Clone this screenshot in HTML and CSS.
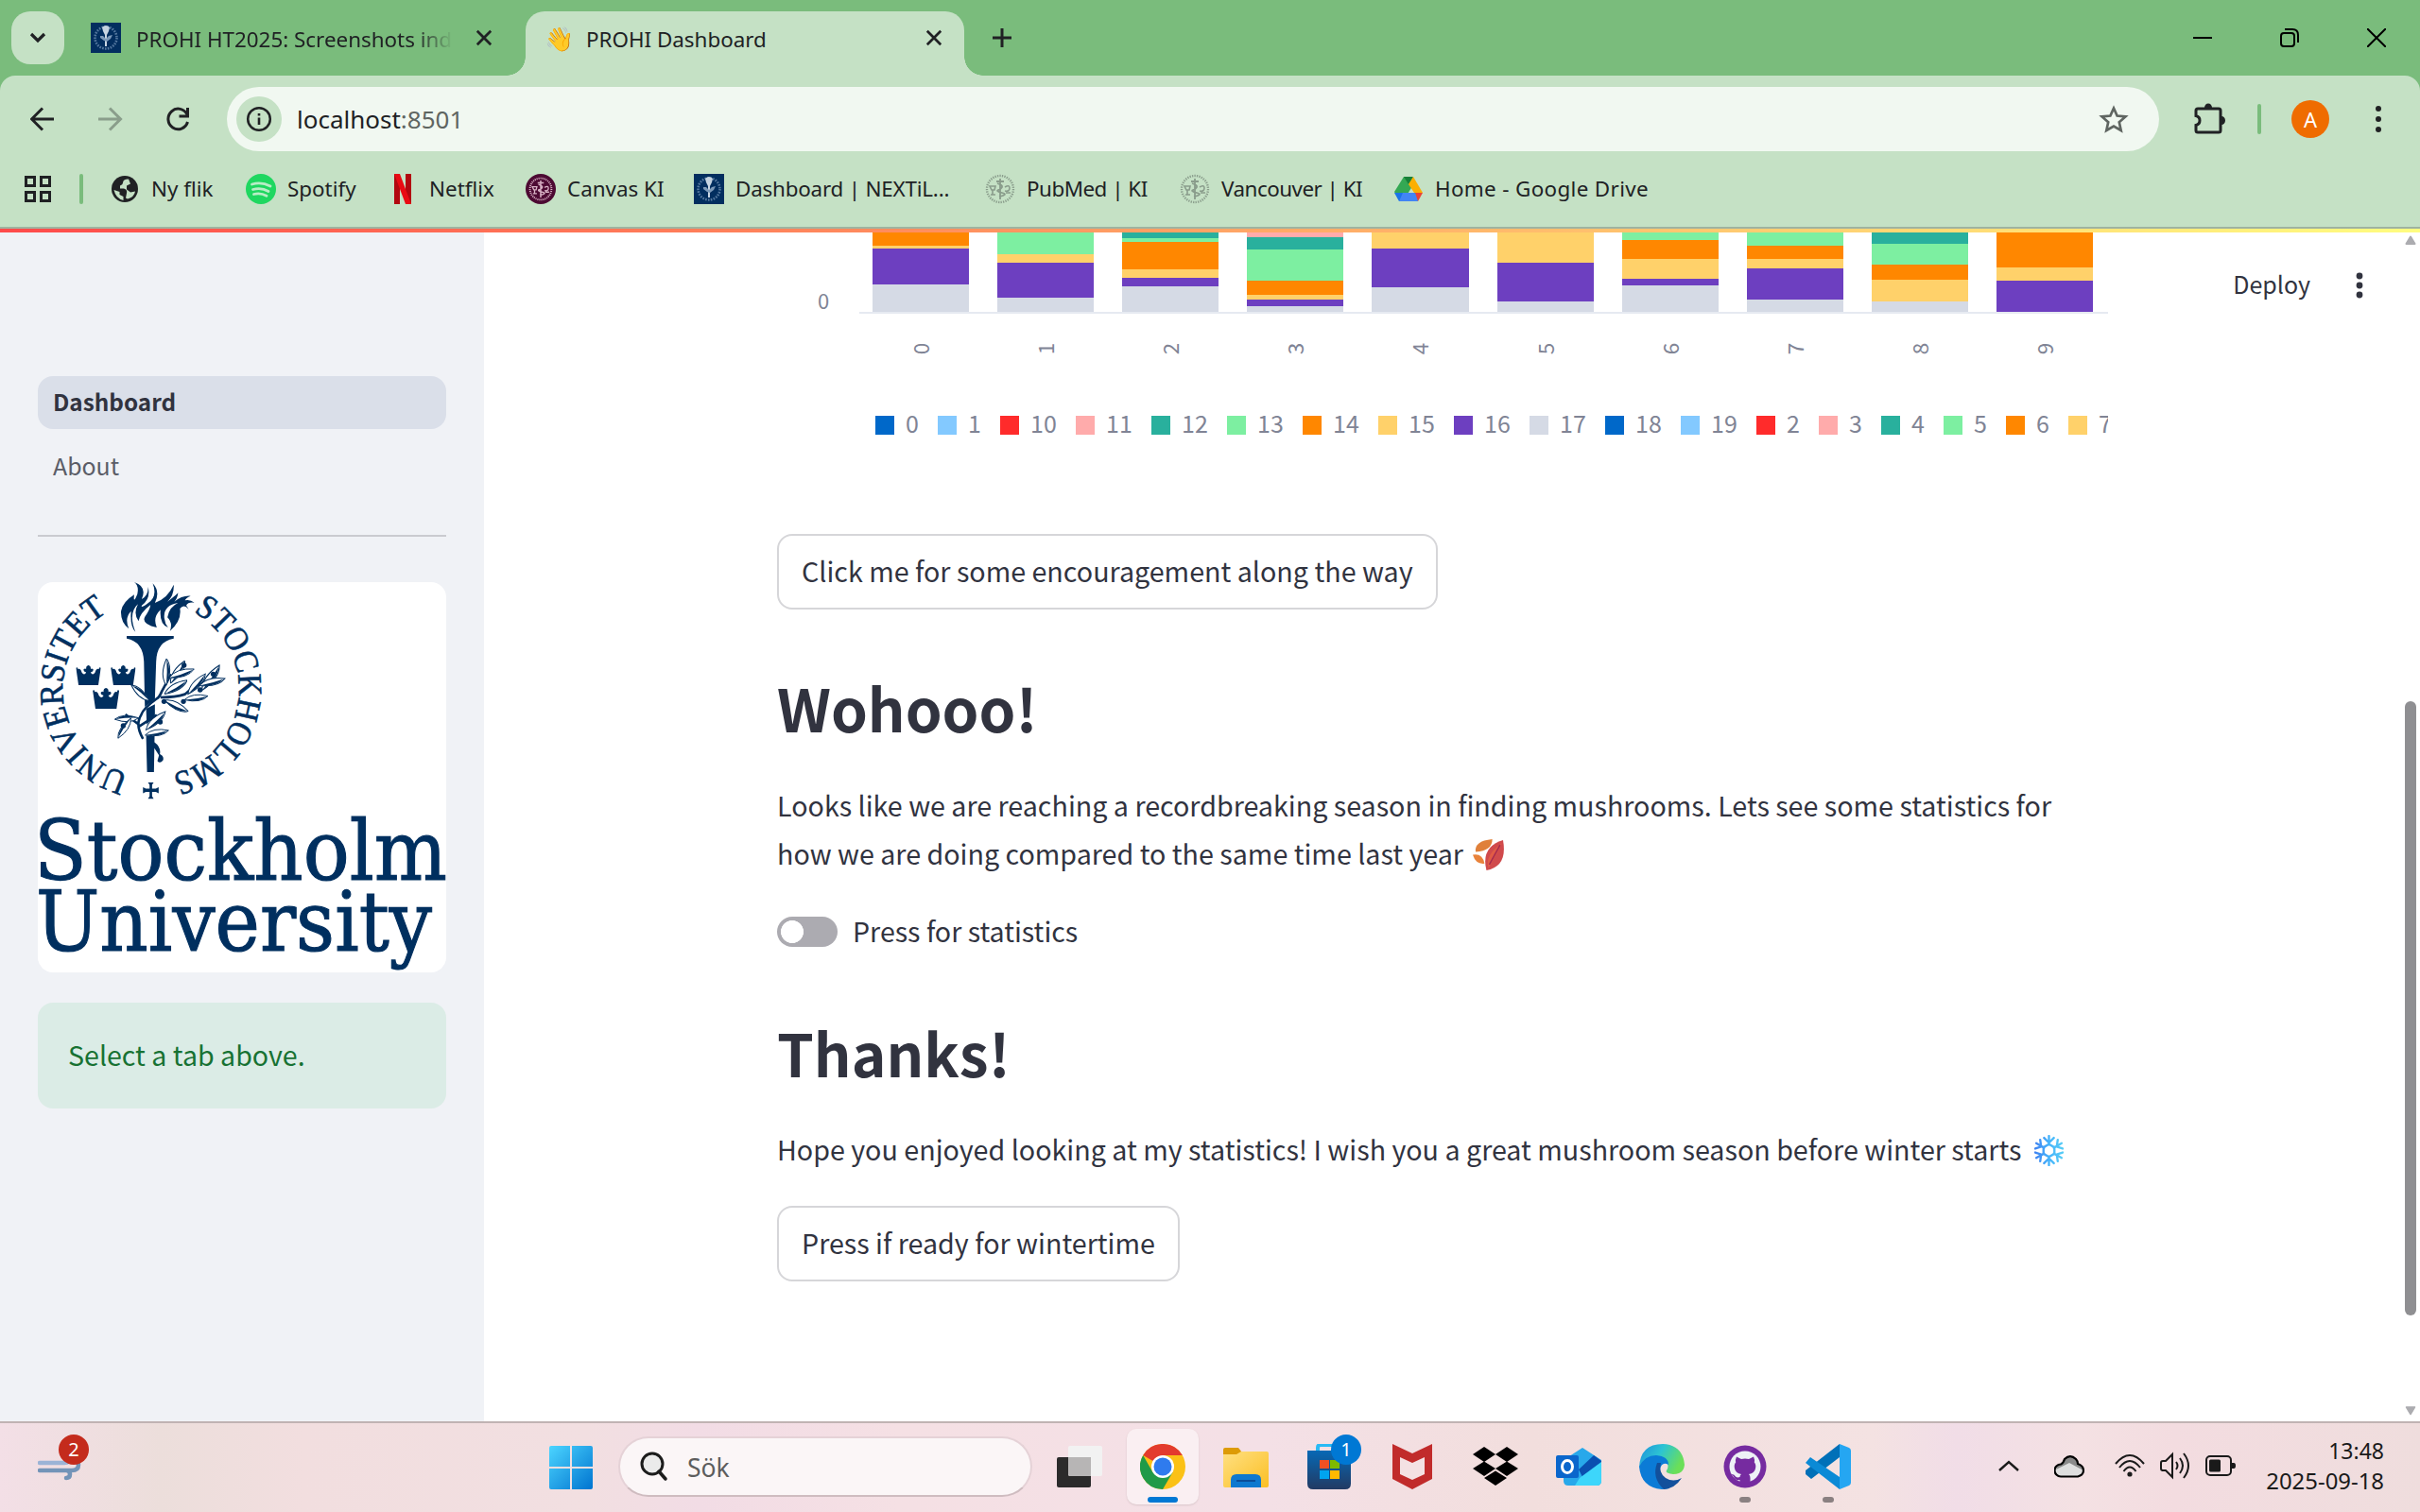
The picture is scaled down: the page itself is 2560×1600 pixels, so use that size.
FILE: index.html
```html
<!DOCTYPE html>
<html lang="en">
<head>
<meta charset="utf-8">
<title>PROHI Dashboard</title>
<link rel="stylesheet" href="styles.css">
</head>
<body>
<svg class="defs" width="0" height="0" aria-hidden="true">
  <defs>
    <symbol id="close" viewBox="0 0 20 20"><path d="M2 2L18 18M18 2L2 18" fill="none" stroke="#202124" stroke-width="3"/></symbol>
    <symbol id="crest" viewBox="0 0 32 32">
      <rect width="32" height="32" fill="#022e5f"/>
      <circle cx="16" cy="16" r="11.5" fill="none" stroke="#55789f" stroke-width="2.6" stroke-dasharray="1.6 1.3"/>
      <path d="M12 5q4-4 8 0l-1 4h-6z" fill="#c4d2e0"/><path d="M13 9h6l-2 4v12h-2V13z" fill="#c9d6e3"/>
      <path d="M10 14l3 0 3 3 3-3 4-1-2 4-4 3-3-1-4-3z" fill="#7c99b8"/>
    </symbol>
    <symbol id="seal" viewBox="0 0 32 32">
      <circle cx="16" cy="16" r="14" fill="none" stroke="currentColor" stroke-width="2.4" stroke-dasharray="1.3 1.2"/>
      <path d="M16 5v22M13 10q6 2 5 4t-4 3 4 3-3 4M12 8h8" fill="none" stroke="currentColor" stroke-width="1.8"/>
      <path d="M5 13h6l-1 4H7zM8 17v5M6 22h5M21 14q5-3 5 1t-5 3M22 20h5" fill="none" stroke="currentColor" stroke-width="1.6"/>
    </symbol>
    <symbol id="crown" viewBox="0 0 78 62">
      <path d="M0 8Q6 4 6 12Q14 8 18 22Q26 34 32 22Q22 20 24 13Q28 9 32 12Q30 2 39 0Q48 2 46 12Q50 9 54 13Q56 20 46 22Q52 34 60 22Q64 8 72 12Q72 4 78 8L70 62H8Z"/>
    </symbol>
    <symbol id="leaf" viewBox="0 0 80 40">
      <path d="M0 32Q24 0 80 4Q60 34 0 32Z" fill="#fff" stroke="#002f5f" stroke-width="3"/>
      <path d="M4 31Q40 22 76 6Q52 34 4 31Z" fill="#002f5f"/>
    </symbol>
  </defs>
</svg>
<div class="screen">
  <header class="browser">
    <div class="tabstrip">
      <button class="tab-search"><svg width="20" height="12" viewBox="0 0 20 12"><path d="M3 2l7 7 7-7" fill="none" stroke="#202124" stroke-width="3.2"/></svg></button>
      <div class="tab">
        <svg class="fav"><use href="#crest"/></svg>
        <span class="tab-title faded">PROHI HT2025: Screenshots indi</span>
        <svg class="x"><use href="#close"/></svg>
      </div>
      <div class="tab active">
        <span class="wave">👋</span>
        <span class="tab-title">PROHI Dashboard</span>
        <svg class="x"><use href="#close"/></svg>
      </div>
      <svg class="plus" viewBox="0 0 20 20"><path d="M10 0v20M0 10h20" stroke="#202124" stroke-width="3"/></svg>
      <div class="window-controls">
        <svg width="20" height="20" viewBox="0 0 20 20"><path d="M0 10h20" stroke="#000" stroke-width="2"/></svg>
        <svg width="20" height="20" viewBox="0 0 20 20" fill="none" stroke="#000" stroke-width="2"><rect x="1" y="5" width="14" height="14" rx="3"/><path d="M5 1h8q6 0 6 6v8"/></svg>
        <svg width="20" height="20" viewBox="0 0 20 20"><path d="M0 0l20 20M20 0L0 20" stroke="#000" stroke-width="2"/></svg>
      </div>
    </div>
    <div class="nav">
      <svg width="26" height="26" viewBox="0 0 26 26" fill="none" stroke="#202124" stroke-width="3"><path d="M25 13H2M13 1.500L1.500 13L13 24.500"/></svg>
      <svg width="26" height="26" viewBox="0 0 26 26" fill="none" stroke="#8a9e8b" stroke-width="3"><path d="M0 13H23M12 1.500L23.500 13L12 24.500"/></svg>
      <svg width="26" height="26" viewBox="0 0 26 26" fill="none" stroke="#202124" stroke-width="3"><path d="M22 8.500A10.500 10.800 0 1 0 22.500 16"/><path d="M22.500 1v9h-9"/></svg>
      <div class="address">
        <span class="site-info"><svg width="28" height="28" viewBox="0 0 28 28"><circle cx="14" cy="14" r="11.800" fill="none" stroke="#202124" stroke-width="2.500"/><path d="M14 12.500v7.500M14 8v2.600" stroke="#202124" stroke-width="2.600"/></svg></span>
        <span class="url">localhost<i>:8501</i></span>
        <svg width="32" height="30" viewBox="0 0 32 30"><path d="M16 3.500l3.600 8 8.900.9-6.700 5.900 1.900 8.700-7.700-4.500-7.700 4.500 1.900-8.700L3.500 12.400l8.900-.9z" fill="none" stroke="#5f6561" stroke-width="2.700"/></svg>
      </div>
      <svg class="ext" width="34" height="34" viewBox="0 0 34 34"><path d="M3 8q0-2 2-2h22q2 0 2 2v21q0 2-2 2H5q-2 0-2-2v-5.500q4-1 4-5t-4-5z" fill="none" stroke="#202124" stroke-width="3"/><path d="M12 5a4 4.500 0 0 1 8 0zM30 14a4 4.500 0 0 1 0 9z" fill="#202124"/></svg>
      <span class="divider"></span>
      <span class="avatar">A</span>
      <svg class="kebab" width="8" height="28" viewBox="0 0 8 28" fill="#202124"><circle cx="4" cy="3" r="3"/><circle cx="4" cy="14" r="3"/><circle cx="4" cy="25" r="3"/></svg>
    </div>
    <div class="bookmarks">
      <svg width="28" height="28" viewBox="0 0 28 28" fill="none" stroke="#202124" stroke-width="3"><path d="M1.500 1.500h9v9h-9zM17.500 1.500h9v9h-9zM1.500 17.500h9v9h-9zM17.500 17.500h9v9h-9z"/></svg>
      <span class="divider"></span>
      <a class="bm"><svg viewBox="0 0 32 32"><circle cx="16" cy="16" r="14" fill="#202124"/><path d="M20 5.500q-6 0-6 4 0 2-3 3v3h4q4 1 3 5l-1 5 2 1q7-2 8-8l-5 1-4-3v-4l4-2z" fill="#c5e1c5"/><path d="M4.500 17l6 2v3l4 2v4q-8-2-10-11z" fill="#c5e1c5"/></svg><span>Ny flik</span></a>
      <a class="bm"><svg viewBox="0 0 32 32"><circle cx="16" cy="16" r="16" fill="#1fd760"/><path d="M6.500 11q10-3 19.500 2M7.500 16.500q9-2.500 16.500 2M8.500 21.500q7-2 13.500 1.800" fill="none" stroke="#b9edc6" stroke-width="2.800" stroke-linecap="round"/></svg><span>Spotify</span></a>
      <a class="bm"><svg viewBox="0 0 32 32"><path d="M7 0h6v32l-6 0zM19 0h6v32h-6z" fill="#b20710"/><path d="M7 0h6l12 32h-6z" fill="#e90a14"/></svg><span>Netflix</span></a>
      <a class="bm"><svg viewBox="0 0 32 32" color="#d9b3c6"><circle cx="16" cy="16" r="16" fill="#4d0a33"/><use href="#seal" x="3" y="3" width="26" height="26"/></svg><span>Canvas KI</span></a>
      <a class="bm tight"><svg><use href="#crest"/></svg><span>Dashboard | NEXTiL...</span></a>
      <a class="bm tighter"><svg color="#899c8b"><use href="#seal"/></svg><span>PubMed | KI</span></a>
      <a class="bm tighter"><svg color="#899c8b"><use href="#seal"/></svg><span>Vancouver | KI</span></a>
      <a class="bm wide"><svg viewBox="0 0 32 32"><path d="M11 3h9l3 5-12 20-4 1-6-10z" fill="#34a853"/><path d="M11 3h10L16 11z" fill="#188038"/><path d="M16 11L21 3l10 17h-9z" fill="#fbaf00"/><path d="M22 20h9l-5 9h-3z" fill="#ea4335"/><path d="M7 20h16l3 9H6z" fill="#4285f4"/><path d="M1 20h9l-4 9z" fill="#1a73e8"/></svg><span>Home - Google Drive</span></a>
    </div>
  </header>
  <div class="page">
    <div class="decoration"></div>
    <aside class="sidebar">
      <nav>
        <a class="link current">Dashboard</a>
        <a class="link">About</a>
      </nav>
      <hr>
      <svg class="logo" width="432" height="413" viewBox="0 0 432 413">
        <defs><path id="ring" d="M119.500 20a93 93 0 0 1 0 186a93 93 0 0 1 0-186"/></defs>
        <rect width="432" height="413" fill="#fff"/>
        <g fill="#002f5f">
          <text class="ring-text"><textPath href="#ring" startOffset="47" textLength="222" lengthAdjust="spacingAndGlyphs">STOCKHOLMS</textPath></text>
          <text class="ring-text"><textPath href="#ring" startOffset="315" textLength="221" lengthAdjust="spacingAndGlyphs">UNIVERSITET</textPath></text>
          <g transform="translate(-40 -246) scale(.3317 .3333)">
            <path d="M428 738Q470 752 452 792Q474 780 472 752Q482 790 452 812Q448 822 470 806Q504 786 487 742Q512 768 494 804Q536 788 554 746Q556 780 534 800Q566 776 568 772Q566 790 556 800Q580 780 608 782Q592 788 590 796Q606 792 620 803Q600 800 594 812L602 824Q586 806 574 822Q580 860 542 893Q552 868 534 850Q540 816 568 804Q520 812 524 852Q526 870 536 882Q508 872 512 826Q486 850 500 882Q450 872 462 848Q478 826 480 810Q446 836 442 862Q424 838 440 808Q408 836 432 896Q414 880 418 830Q396 852 411 886Q384 866 386 830Q392 800 428 778Q424 810 438 776Q444 750 428 738Z"/>
            <path d="M404 909H554V917Q500 926 498 990L494 1110L462 1134L459 990Q456 926 404 917ZM466 1140L494 1126V1160L468 1190ZM466 1224H493L491 1341H469ZM492 1246Q514 1262 510 1284Q524 1290 520 1304Q510 1316 502 1306L507 1288L490 1262Z"/>
            <use href="#crown" x="242" y="1002" width="80" height="63"/><use href="#crown" x="353" y="1002" width="80" height="63"/><use href="#crown" x="294" y="1074" width="88" height="67"/>
            <path d="M456 1236Q430 1190 450 1160Q456 1140 500 1108Q508 1104 516 1085L546 1030M512 1104Q560 1104 590 1094L640 1050M440 1188L400 1158M444 1196L500 1160" fill="none" stroke="#002f5f" stroke-width="8"/>
            <use href="#leaf" width="80" height="40" transform="translate(524 1034) rotate(-38)"/>
            <use href="#leaf" width="86" height="40" transform="translate(536 1010)"/>
            <use href="#leaf" width="80" height="40" transform="translate(518 1062) rotate(-12)"/>
            <use href="#leaf" width="80" height="40" transform="translate(500 1055) rotate(-70)"/>
            <use href="#leaf" width="88" height="40" transform="translate(580 1068) rotate(-30)"/>
            <use href="#leaf" width="98" height="46" transform="translate(620 1054) rotate(-36)"/>
            <use href="#leaf" width="96" height="40" transform="translate(630 1034) rotate(4)"/>
            <use href="#leaf" width="90" height="36" transform="translate(584 1082) rotate(10)"/>
            <use href="#leaf" width="80" height="40" transform="translate(546 1090) rotate(44)"/>
            <use href="#leaf" width="74" height="36" transform="translate(452 1130) rotate(-120)"/>
            <use href="#leaf" width="80" height="36" transform="translate(438 1198) rotate(196)"/>
            <use href="#leaf" width="74" height="36" transform="translate(436 1192) rotate(142)"/>
            <use href="#leaf" width="90" height="40" transform="translate(448 1180) rotate(-24)"/>
            <use href="#leaf" width="90" height="36" transform="translate(458 1194) rotate(8)"/>
            <circle cx="587" cy="1002" r="8"/><circle cx="680" cy="1030" r="8"/><circle cx="638" cy="1080" r="8"/><circle cx="585" cy="1117" r="8"/><circle cx="523" cy="1117" r="8"/><circle cx="393" cy="1194" r="8"/><circle cx="511" cy="1182" r="8"/>
            <path d="M472 1374h18l-5 8v12h12l9-5v20l-9-5h-12v14l5 8h-18l5-8v-14h-12l-9 5v-20l9 5h12v-12z"/>
          </g>
          <text class="slab" x="-4" y="315" textLength="437" lengthAdjust="spacingAndGlyphs">Stockholm</text>
          <text class="slab" x="-2" y="390" textLength="419" lengthAdjust="spacingAndGlyphs">University</text>
        </g>
      </svg>
      <div class="alert">Select a tab above.</div>
    </aside>
    <main>
      <div class="toolbar"><span>Deploy</span><svg width="8" height="28" viewBox="0 0 8 28" fill="#31333f"><circle cx="4" cy="4" r="3.400"/><circle cx="4" cy="14" r="3.400"/><circle cx="4" cy="24" r="3.400"/></svg></div>
      <section class="chart">
        <span class="y-label">0</span>
        <div class="plot">
          <div class="bars">
            <div class="bar"><i class="c14" style="height:14px"></i><i class="c15" style="height:3px"></i><i class="c16" style="height:38px"></i><i class="c17" style="height:29px"></i></div>
            <div class="bar"><i class="c13" style="height:23px"></i><i class="c15" style="height:9px"></i><i class="c16" style="height:37px"></i><i class="c17" style="height:15px"></i></div>
            <div class="bar"><i class="c12" style="height:6px"></i><i class="c13" style="height:4px"></i><i class="c14" style="height:29px"></i><i class="c15" style="height:9px"></i><i class="c16" style="height:9px"></i><i class="c17" style="height:27px"></i></div>
            <div class="bar"><i class="c11" style="height:5px"></i><i class="c12" style="height:13px"></i><i class="c13" style="height:33px"></i><i class="c14" style="height:15px"></i><i class="c15" style="height:5px"></i><i class="c16" style="height:7px"></i><i class="c17" style="height:6px"></i></div>
            <div class="bar"><i class="c15" style="height:17px"></i><i class="c16" style="height:41px"></i><i class="c17" style="height:26px"></i></div>
            <div class="bar"><i class="c15" style="height:32px"></i><i class="c16" style="height:41px"></i><i class="c17" style="height:11px"></i></div>
            <div class="bar"><i class="c13" style="height:8px"></i><i class="c14" style="height:20px"></i><i class="c15" style="height:21px"></i><i class="c16" style="height:7px"></i><i class="c17" style="height:28px"></i></div>
            <div class="bar"><i class="c13" style="height:14px"></i><i class="c14" style="height:14px"></i><i class="c15" style="height:10px"></i><i class="c16" style="height:33px"></i><i class="c17" style="height:13px"></i></div>
            <div class="bar"><i class="c12" style="height:12px"></i><i class="c13" style="height:22px"></i><i class="c14" style="height:16px"></i><i class="c15" style="height:23px"></i><i class="c17" style="height:11px"></i></div>
            <div class="bar"><i class="c14" style="height:37px"></i><i class="c15" style="height:14px"></i><i class="c16" style="height:33px"></i></div>
          </div>
          <div class="x-labels"><b>0</b><b>1</b><b>2</b><b>3</b><b>4</b><b>5</b><b>6</b><b>7</b><b>8</b><b>9</b></div>
          <div class="legend">
            <span><i class="c0"></i>0</span><span><i class="c1"></i>1</span><span class="two"><i class="c10"></i>10</span><span class="two"><i class="c11"></i>11</span><span class="two"><i class="c12"></i>12</span><span class="two"><i class="c13"></i>13</span><span class="two"><i class="c14"></i>14</span><span class="two"><i class="c15"></i>15</span><span class="two"><i class="c16"></i>16</span><span class="two"><i class="c17"></i>17</span><span class="two"><i class="c0"></i>18</span><span class="two"><i class="c1"></i>19</span><span><i class="c10"></i>2</span><span><i class="c11"></i>3</span><span><i class="c12"></i>4</span><span><i class="c13"></i>5</span><span><i class="c14"></i>6</span><span><i class="c15"></i>7</span>
          </div>
        </div>
      </section>
      <section class="content">
        <button class="btn">Click me for some encouragement along the way</button>
        <h1>Wohooo!</h1>
        <p>Looks like we are reaching a recordbreaking season in finding mushrooms. Lets see some statistics for<br>how we are doing compared to the same time last year <svg class="emoji" viewBox="0 0 32 32"><path d="M3 13Q1 2 20 0Q20 12 3 13Z" fill="#e0803a"/><path d="M0 16Q10 14 12 25Q3 26 0 16Z" fill="#e9823a"/><path d="M14 32Q8 8 31 1Q36 28 14 32Z" fill="#d04a4c"/><path d="M16 30Q12 16 30 4Q24 16 16 30Z" fill="#e05b45"/><path d="M17 26L28 6" stroke="#a62a4f" stroke-width="1.500"/></svg></p>
        <label class="toggle"><span class="switch"></span><span class="label">Press for statistics</span></label>
        <h1 class="second">Thanks!</h1>
        <p class="closing">Hope you enjoyed looking at my statistics! I wish you a great mushroom season before winter starts <svg class="emoji snow" viewBox="0 0 32 32"><defs><linearGradient id="ice" gradientUnits="userSpaceOnUse" x1="0" y1="0" x2="32" y2="0"><stop offset="0" stop-color="#3f7df0"/><stop offset=".5" stop-color="#45b3fb"/><stop offset="1" stop-color="#5bd0f5"/></linearGradient></defs><path d="M16 1v9M16 22v9M3 8.500l8 4.700M21 19l8 4.500M3 23.500l8-4.500M21 13.200l8-4.700M11 3l5 5 5-5M11 29l5-5 5 5M2 14l6-2-1-7M30 14l-6-2 1-7M2 18l6 2-1 7M30 18l-6 2 1 7M16 9.500l5.600 3.200v6.600L16 22.500l-5.600-3.200v-6.600z" fill="none" stroke="url(#ice)" stroke-width="2.300" stroke-linecap="round" stroke-linejoin="round"/></svg></p>
        <button class="btn">Press if ready for wintertime</button>
      </section>
      <div class="scrollbar"><svg width="12" height="10" viewBox="0 0 12 10"><path d="M6 1.500L10.500 9h-9z" fill="#acacb0" stroke="#acacb0" stroke-width="2" stroke-linejoin="round"/></svg><span class="thumb"></span><svg width="12" height="10" viewBox="0 0 12 10"><path d="M6 8.500L10.500 1h-9z" fill="#acacb0" stroke="#acacb0" stroke-width="1.500" stroke-linejoin="round"/></svg></div>
    </main>
  </div>
  <footer class="taskbar">
    <div class="weather">
      <svg width="46" height="30" viewBox="0 0 46 30" fill="none" stroke-width="4.500" stroke-linecap="round"><path d="M2 11h26q6 0 6-6" stroke="#9bb3d6"/><path d="M2 19h34q7 0 7-6t-7-5M28 19h2q4 0 4 4t-4 4" stroke="#7394b8"/></svg>
      <span class="badge red">2</span>
    </div>
    <div class="dock">
      <svg class="start" width="46" height="46" viewBox="0 0 46 46"><defs><linearGradient id="win" x1="0" y1="0" x2="1" y2="1" gradientUnits="objectBoundingBox"><stop offset="0" stop-color="#4cd5ff"/><stop offset="1" stop-color="#0074d0"/></linearGradient></defs><path d="M2 0h20v22H0V2q0-2 2-2zM24 0h20q2 0 2 2v20H24zM0 24h22v22H2q-2 0-2-2zM24 24h22v20q0 2-2 2H24z" fill="url(#win)"/></svg>
      <div class="search"><svg width="30" height="32" viewBox="0 0 30 32"><circle cx="13" cy="13" r="11" fill="#ebebeb" stroke="#1c1c1c" stroke-width="3"/><path d="M20 21l7 8" stroke="#1c1c1c" stroke-width="3.500" stroke-linecap="round"/></svg><span>Sök</span></div>
      <div class="app"><svg viewBox="0 0 48 48"><rect y="14" width="36" height="32" rx="2" fill="#2b2b2b"/><rect x="12" y="2" width="36" height="32" rx="2" fill="#f2f2f2"/><path d="M12 14h24v20H14q-2 0-2-2z" fill="#b7b5b5"/></svg></div>
      <div class="app selected"><svg viewBox="0 0 48 48"><circle cx="24" cy="24" r="24" fill="#fbc116"/><path d="M24 24L3.200 12A24 24 0 0 1 44.800 12H24z" fill="#e33b2e"/><path d="M3.200 12A24 24 0 0 0 24 48L34.500 30 24 24 13.500 30z" fill="#219a48"/><circle cx="24" cy="24" r="12" fill="#fff"/><circle cx="24" cy="24" r="9.500" fill="#2f7bee"/></svg></div>
      <div class="app"><svg viewBox="0 0 48 48"><defs><linearGradient id="fold" x1="0" y1="0" x2="1" y2="1"><stop offset="0" stop-color="#ffe082"/><stop offset="1" stop-color="#fbbf24"/></linearGradient></defs><path d="M0 6q0-2 2-2h14l4 5v7H0z" fill="#dd9b06"/><path d="M0 11h14l5-3h27q2 0 2 2v34q0 2-2 2H2q-2 0-2-2z" fill="url(#fold)"/><path d="M8 46V38q0-6 6-6h20q6 0 6 6v8z" fill="#0d78cf"/><path d="M14 39h20" stroke="#0a4d99" stroke-width="2"/></svg></div>
      <div class="app"><svg viewBox="0 0 48 48"><defs><linearGradient id="bag" x1="0" y1="0" x2="0" y2="1"><stop offset="0" stop-color="#0769b5"/><stop offset="1" stop-color="#223a63"/></linearGradient></defs><path d="M12 10V4q0-3 3-3h20" fill="none" stroke="#28baf5" stroke-width="4"/><path d="M1 7h46v35q0 6-6 6H7q-6 0-6-6z" fill="url(#bag)"/><path d="M14 17h10v9H14z" fill="#f25022"/><path d="M25 17h10v9H25z" fill="#7fba00"/><path d="M14 28h10v9H14z" fill="#00a4ef"/><path d="M25 28h10v9H25z" fill="#ffb900"/></svg><span class="badge blue">1</span></div>
      <div class="app"><svg viewBox="0 0 48 48"><path d="M3 0l21 10L45 0v37L24 48 3 37z" fill="#c12b2b"/><path d="M11 14l13 6 13-6v18l-13 6-13-6z" fill="#f4e1e3"/></svg></div>
      <div class="app"><svg viewBox="0 0 48 48"><path d="M12 3l12 8-12 8L0 11zM36 3l12 8-12 8-12-8zM12 18.500l12 7.500-12 8L0 26zM36 18.500L48 26l-12 8-12-8zM24 28.500l12 7.500-12 8-12-8z" fill="#000"/></svg></div>
      <div class="app"><svg viewBox="0 0 48 48"><path d="M28 4l20 13v22q0 5-5 5H13q-5 0-5-5V17z" fill="#28a8ea"/><path d="M24 27L40 12l8 6q0 8-6 12l-12 9z" fill="#0a4fb0"/><path d="M25 36L48 19v20q0 5-5 5H20z" fill="#3dd6fb"/><rect y="12" width="24" height="24" rx="2" fill="#0a66cc"/><ellipse cx="12" cy="24" rx="5.500" ry="6.500" fill="none" stroke="#fff" stroke-width="3"/></svg></div>
      <div class="app"><svg viewBox="0 0 48 48"><defs><linearGradient id="edge" x1="0" y1="0" x2="1" y2=".4"><stop offset="0" stop-color="#1f8fdc"/><stop offset=".5" stop-color="#2cc4d3"/><stop offset="1" stop-color="#6bdf58"/></linearGradient></defs><path d="M0 25Q1 0 25 0Q46 1 48 22Q47 32 36 32Q27 31 29 28Q33 22 26 16Q12 8 0 25Z" fill="url(#edge)"/><path d="M0 24Q6 12 18 12Q31 13 31 22Q24 18 22 27Q23 38 32 47Q28 48 24 48Q2 46 0 24Z" fill="#0b7bd6"/><path d="M19 20Q13 36 26 48Q38 47 45 36Q36 41 28 36Q20 30 23 20Z" fill="#12509c"/></svg></div>
      <div class="app running"><svg viewBox="0 0 48 48"><circle cx="24" cy="24" r="22.500" fill="#762ba0"/><circle cx="24" cy="24" r="16.500" fill="#eef1f6"/><path d="M15 13.500l5 2.500q4-1 8 0l5-2.500q1.500 3 .8 6Q36 22 35 26q-1 5-7 6 1.500 1.500 1.500 4v5.500h-11V38q-5 1-7-4l-2-2q3-.5 4.500 2.500 2 1.500 4.500.5 0-2 1.500-3-6-1-7-6-1-4 1.200-6.500-.7-3 .8-6z" fill="#762ba0"/></svg></div>
      <div class="app running"><svg viewBox="0 0 48 48"><path d="M36 0v14L6 37 0 32v-4z" fill="#0170b8"/><path d="M0 20l5-6 31 21v13z" fill="#0b8ad6"/><path d="M36 0l10 4q2 1 2 3v34q0 2-2 3l-10 4z" fill="#25a6f2"/></svg></div>
    </div>
    <div class="tray">
      <svg width="22" height="12" viewBox="0 0 22 12"><path d="M1 11L11 2l10 9" fill="none" stroke="#1a1a1a" stroke-width="2.400"/></svg>
      <svg width="32" height="25" viewBox="0 0 32 25"><path d="M7 23.500a6.500 6.500 0 0 1 0-13Q10 9 11 5q6-6 12 0 2 2 2 5 6 2 6 7t-6 6.500z" fill="#dedede"/><path d="M2 16q2-5 5-6 3-1 4-5 6-6 12 0 2 2 2 5 5 2 6 7l-15-8z" fill="#8a8a8a"/><path d="M7 23.500a6.500 6.500 0 0 1 0-13Q10 9 11 5q6-6 12 0 2 2 2 5 6 2 6 7t-6 6.500z" fill="none" stroke="#000" stroke-width="2.200"/></svg>
      <svg width="32" height="26" viewBox="0 0 32 26" fill="none" stroke="#1a1a1a" stroke-width="2"><path d="M1 11Q16-7 31 11M5 15Q16 1 27 15M9.500 19Q16 10 22.500 19"/><circle cx="16" cy="22" r="2.600" fill="#1a1a1a" stroke="none"/></svg>
      <svg width="32" height="30" viewBox="0 0 32 30" fill="none" stroke="#1a1a1a" stroke-width="2"><path d="M1 12q0-2 2-2h3l7-7v24l-7-7H3q-2 0-2-2zM17 11q3 4 0 8M21 7q6 8 0 16M25 2q10 13 0 26"/></svg>
      <svg width="32" height="22" viewBox="0 0 32 22"><rect x="1" y="1" width="26" height="20" rx="4" fill="none" stroke="#1a1a1a" stroke-width="2"/><rect x="4" y="4.500" width="12" height="13" rx="1.500" fill="#1a1a1a"/><path d="M28 8h2q2 0 2 3t-2 3h-2z" fill="#1a1a1a"/></svg>
    </div>
    <div class="clock"><span>13:48</span><span class="date">2025-09-18</span></div>
  </footer>
</div>
</body>
</html>
```
FILE: styles.css
```css
* { box-sizing: border-box; }
body { margin: 0; font-family: "Noto Sans CJK SC", sans-serif; color: #31333f; }
svg { display: block; flex: none; }
i { font-style: normal; }
b { font-weight: 400; }
.defs { position: absolute; }
.screen { width: 2560px; height: 1600px; display: flex; flex-direction: column; overflow: hidden; background: #fff; }

/* Browser window */
.browser { height: 242px; background: #7abc7c; border-bottom: 2px solid #9fb3a0; font-family: "Noto Sans", sans-serif; color: #202124; flex: none; }
.tabstrip { height: 80px; padding: 12px 36px 0 12px; display: flex; align-items: flex-start; }
.tab-search { width: 56px; height: 56px; border: 0; padding: 0; border-radius: 20px; background: #c5e1c5; display: flex; align-items: center; justify-content: center; }
.tab { height: 68px; width: 464px; margin-left: 8px; padding: 0 23px 12px 20px; display: flex; align-items: center; font-size: 22.400px; }
.fav { width: 32px; height: 32px; }
.tab-title { flex: 1; margin-left: 16px; padding-top: 3px; white-space: nowrap; overflow: hidden; line-height: 36px; }
.tab .faded { flex: none; width: 335px; -webkit-mask: linear-gradient(90deg, #000 88%, transparent); mask: linear-gradient(90deg, #000 88%, transparent); margin-right: 24px; }
.x { width: 18px; height: 18px; }
.active { position: relative; background: #c5e1c5; border-radius: 20px 20px 0 0; margin-left: 16px; }
.active::before, .active::after { content: ""; position: absolute; bottom: 0; width: 20px; height: 20px; }
.active::before { left: -20px; background: radial-gradient(circle at 0 0, transparent 19.500px, #c5e1c5 20px); }
.active::after { right: -20px; background: radial-gradient(circle at 100% 0, transparent 19.500px, #c5e1c5 20px); }
.wave { width: 32px; font-size: 25px; line-height: 32px; }
.active .tab-title { margin-left: 12px; }
.plus { width: 20px; height: 20px; margin: 18px 0 0 30px; }
.window-controls { display: flex; gap: 72px; margin: 18px 0 0 auto; }
.nav { height: 80px; padding: 12px 40px 0 32px; display: flex; align-items: center; background: #c5e1c5; border-radius: 16px 16px 0 0; }
.nav > svg + svg { margin-left: 46px; }
.address { width: 2044px; height: 68px; margin-left: 38px; padding: 0 32px 0 10px; border-radius: 34px; background: #f1f8f1; display: flex; align-items: center; }
.site-info { width: 48px; height: 48px; border-radius: 50%; background: #c5e1c5; display: flex; align-items: center; justify-content: center; }
.url { flex: 1; margin-left: 16px; font-size: 26px; }
.url i { color: #5f6561; }
.nav .ext { margin-left: 36px; }
.divider { width: 4px; height: 32px; border-radius: 2px; background: #7abc7c; }
.nav .divider { margin-left: 34px; }
.avatar { width: 40px; height: 40px; margin-left: 32px; border-radius: 50%; background: #ef6c00; color: #fff; font-size: 22px; line-height: 40px; text-align: center; }
.nav .kebab { margin-left: 48px; }
.bookmarks { height: 80px; padding-left: 26px; background: #c5e1c5; display: grid; grid-template-columns: 58px 32px 144px 150px 146px 178px 308px 206px 226px auto; justify-content: start; align-items: center; }
.bm { display: flex; align-items: center; gap: 12px; font-size: 22.400px; white-space: nowrap; line-height: 32px; }
.bm svg { width: 32px; height: 32px; }
.tight { letter-spacing: -.2px; }
.tighter { letter-spacing: -.5px; }
.wide { letter-spacing: .35px; }

/* Web page */
.page { position: relative; flex: 1; display: flex; min-height: 0; }
.decoration { position: absolute; z-index: 2; inset: 0 0 auto 0; height: 4px; background: linear-gradient(90deg, #ff4b4b, #fffd80); }
.sidebar { width: 512px; padding: 156px 40px 0; background: #f0f2f6; flex: none; }
.link { display: flex; align-items: center; height: 56px; padding: 0 0 4px 16px; margin-bottom: 12px; border-radius: 16px; font-size: 24.900px; color: #5b5d67; }
.current { background: #dadfe9; color: #31333f; font-weight: 700; font-size: 24.300px; }
hr { height: 2px; margin: 32px 0 48px; border: 0; background: #cacbd0; }
nav { height: 136px; }
.logo { border-radius: 16px; }
.ring-text { font: 36px "Liberation Serif", serif; stroke: #002f5f; stroke-width: .6px; }
.slab { font: 87px "DejaVu Serif", serif; stroke: #002f5f; stroke-width: 1.200px; }
.alert { height: 112px; margin-top: 32px; padding: 0 0 3px 32px; display: flex; align-items: center; border-radius: 16px; background: #dbece6; color: #177233; font-size: 28.600px; }
main { position: relative; flex: 1; padding-left: 310px; }
.toolbar { position: absolute; z-index: 1; right: 60px; top: 40px; height: 40px; display: flex; align-items: center; gap: 48px; font-size: 25px; line-height: 36px; }
.toolbar span { padding-bottom: 4px; }

.chart { display: flex; padding-top: 4px; height: 323px; color: #808495; }
.y-label { width: 87px; padding-left: 43px; padding-top: 56px; font-size: 22px; line-height: 30px; }
.plot { width: 1321px; overflow: hidden; }
.bars { height: 86px; border-bottom: 2px solid #e6eaf1; display: grid; grid-template-columns: repeat(10, 1fr); }
.bar { margin: 0 16px 0 14px; display: flex; flex-direction: column; }
.bar i { display: block; flex: none; }
.x-labels { display: grid; grid-template-columns: repeat(10, 1fr); margin-top: 21px; height: 32px; }
.x-labels b { justify-self: center; width: 32px; height: 32px; line-height: 28px; font-size: 22.500px; text-align: center; transform: rotate(-90deg); }
.legend { display: flex; height: 40px; margin-top: 44px; padding-left: 17px; font-size: 25px; line-height: 37px; }
.legend span { flex: none; width: 66px; display: flex; align-items: flex-start; gap: 12px; }
.legend .two { width: 80px; }
.legend i { width: 20px; height: 20px; margin-top: 11px; flex: none; }
.c0 { background: #0068c9; } .c1 { background: #83c9ff; } .c10 { background: #ff2b2b; } .c11 { background: #ffabab; } .c12 { background: #29b09d; }
.c13 { background: #7defa1; } .c14 { background: #ff8700; } .c15 { background: #ffd16a; } .c16 { background: #6d3fc0; } .c17 { background: #d5dae5; }

.content { display: flex; flex-direction: column; align-items: flex-start; }
.btn { height: 80px; padding: 0 24px 3px; border: 2px solid #d6d6d9; border-radius: 16px; background: #fff; font: 28.660px/73px "Noto Sans CJK SC", sans-serif; color: #31333f; white-space: nowrap; }
h1 { margin: 60px 0 0; font-size: 62.200px; line-height: 86px; font-weight: 700; }
.second { margin-top: 68px; }
p { margin: 35px 0 0; font-size: 28.660px; line-height: 51px; white-space: nowrap; }
.closing { margin-top: 34px; }
.emoji { display: inline-block; width: 33px; height: 33px; margin-left: 4px; vertical-align: -6px; }
.snow { margin-left: 6px; }
.toggle { display: flex; align-items: center; gap: 16px; height: 32px; margin-top: 42px; font-size: 28.600px; }
.label { padding-bottom: 3px; }
.switch { width: 64px; height: 32px; border-radius: 16px; background: radial-gradient(circle at 16px 16px, #fff 11.700px, #acabb1 12.300px); }
p + .btn { margin-top: 35px; }
.scrollbar { position: absolute; right: 4px; top: 7px; bottom: 6px; width: 12px; display: flex; flex-direction: column; align-items: center; justify-content: space-between; }
.thumb { width: 12px; height: 650px; margin: 483px 0 auto; border-radius: 6px; background: #8f8f92; }

/* Taskbar */
.taskbar { position: relative; height: 96px; flex: none; border-top: 2px solid #c0b3b3; display: flex; font-family: "Noto Sans", sans-serif; color: #1a1a1a; background: linear-gradient(90deg, #f3dfe6 0, #ecdedb 170px, #f2dedf 320px, #f2dfe1 620px, #f2dce5 740px, #f5e0e4 950px, #f4e0e6 1340px, #f2dedd 1620px, #f4e2e2 1980px, #f1dde7 2070px, #f4e1e3 2200px, #f3dce0 2300px, #efdddd 2560px); }
.weather { position: relative; width: 581px; padding: 31px 0 0 40px; }
.badge { position: absolute; width: 32px; height: 32px; border-radius: 50%; color: #fff; font-size: 20px; line-height: 31px; text-align: center; }
.red { left: 62px; top: 12px; background: #c42b1c; }
.blue { right: 4px; top: 6px; background: #0078d4; }
.dock { display: flex; align-items: flex-start; }
.start { margin-top: 24px; }
.search { width: 438px; height: 64px; margin: 14px 6px 0 27px; padding-left: 21px; border: 2px solid #e5d2d7; border-bottom-color: #cfbcc0; border-radius: 32px; background: #fbf6f7; display: flex; align-items: center; gap: 20px; font-size: 26.500px; color: #5d5d5d; }
.search span { padding-top: 1px; }
.app { position: relative; width: 76px; height: 80px; margin: 6px 6px 0; padding: 16px 14px; border-radius: 10px; }
.app svg { width: 48px; height: 48px; }
.selected { background: #faeff2; box-shadow: 0 1px 2px #d9c6ca; }
.selected::after, .running::after { content: ""; position: absolute; bottom: 2px; left: 22px; width: 32px; height: 6px; border-radius: 3px; background: #0078d4; }
.running::after { left: 32px; width: 12px; background: #8a8081; }
.tray { position: absolute; left: 2114px; top: 0; height: 90px; display: grid; grid-template-columns: 59px 64px 48px 48px 32px; align-items: center; }
.clock { margin: 13px 38px 0 auto; display: flex; flex-direction: column; align-items: flex-end; font-size: 23px; line-height: 32px; }
.date { font-size: 23.900px; }
```
